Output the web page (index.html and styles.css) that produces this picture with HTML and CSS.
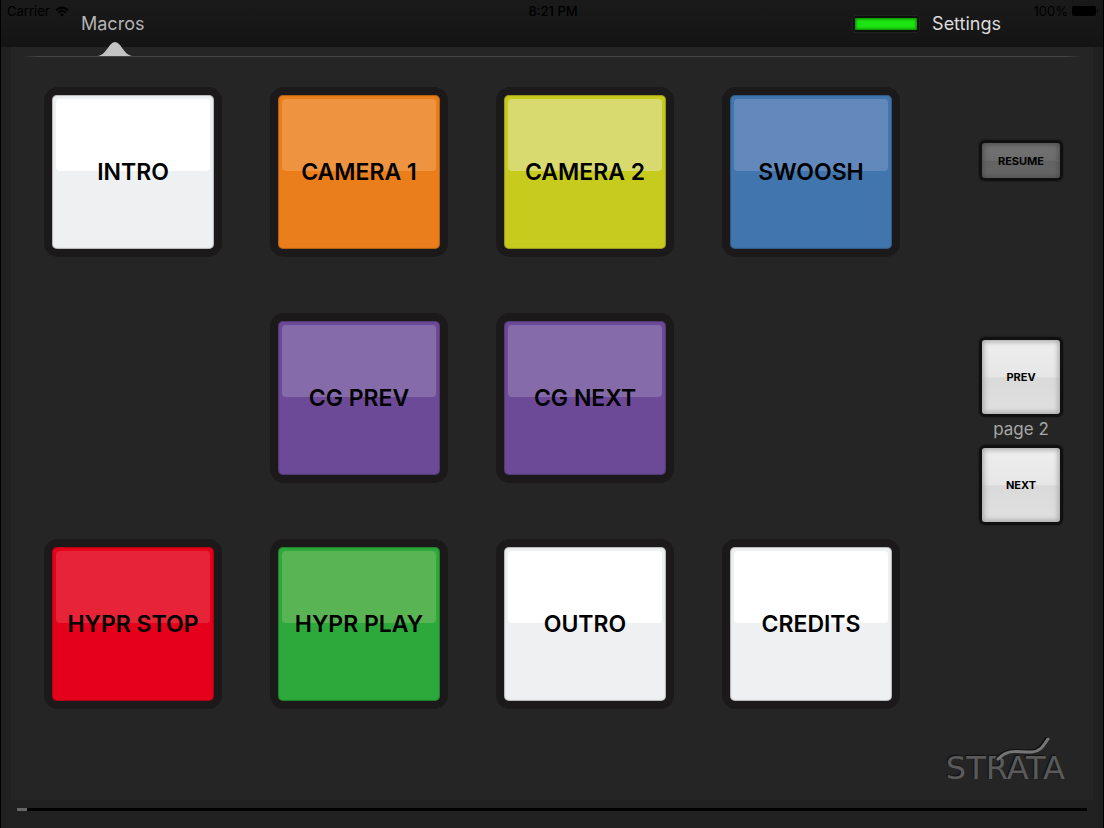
FILE: index.html
```
<!DOCTYPE html>
<html lang="en">
<head>
    <meta charset="utf-8">
    <title>Macros</title>
    <link rel="stylesheet" href="styles.css">
</head>
<body>
    <header class="top-bar">
        <div class="status-bar">
            <span class="carrier">Carrier
                <svg width="14" height="11" viewBox="0 0 14 11" fill="none" stroke="#000" stroke-width="2">
                    <path d="M1 4.2Q7-1 13 4.2M3.2 6.6Q7 3.4 10.8 6.6"/>
                    <path d="M7 10.5L4.8 8.4Q7 6.8 9.2 8.4Z" fill="#000" stroke="none"/>
                </svg>
            </span>
            <span class="clock">8:21 PM</span>
            <span class="battery">100%
                <svg width="27" height="10" viewBox="0 0 27 10">
                    <rect width="24" height="10" rx="2"/>
                    <path d="M25 3Q27 5 25 7Z"/>
                </svg>
            </span>
        </div>
        <nav class="tabs">
            <a class="tab active" href="#macros">Macros
                <svg class="pointer" width="34" height="14" viewBox="0 0 34 14">
                    <path d="M0 14C5 13 7 10 12 3Q17-3 22 3C27 10 29 13 34 14Z" fill="#c4c4c4"/>
                </svg>
            </a>
            <span class="led"></span>
            <a class="tab settings" href="#settings">Settings</a>
        </nav>
    </header>

    <main class="panel">
        <hr class="rule">
        <div class="board">
            <div class="keys">
                <button class="key white">INTRO</button>
                <button class="key orange">CAMERA 1</button>
                <button class="key yellow">CAMERA 2</button>
                <button class="key blue">SWOOSH</button>

                <button class="key purple second">CG PREV</button>
                <button class="key purple">CG NEXT</button>

                <button class="key red first">HYPR STOP</button>
                <button class="key green">HYPR PLAY</button>
                <button class="key white">OUTRO</button>
                <button class="key white">CREDITS</button>
            </div>

            <div class="side">
                <button class="small resume">RESUME</button>
                <button class="small">PREV</button>
                <p class="page">page 2</p>
                <button class="small">NEXT</button>
            </div>
        </div>

        <div class="brand">
            <div class="logo">
                <span>STRATA</span>
                <svg class="swoosh" width="56" height="26" viewBox="0 0 56 26" fill="none" stroke-linecap="round">
                    <path d="M2 21C14 9 24 15 36 14C46 13 48 5 52 1" stroke="#111" stroke-width="3"/>
                    <path d="M3 22C15 10 25 16 37 15C47 14 49 7 53 2" stroke="#777" stroke-width="3"/>
                </svg>
            </div>
        </div>
    </main>

    <div class="track"><div class="thumb"></div></div>
</body>
</html>
```
FILE: styles.css
```
* {
    box-sizing: border-box;
}

body {
    margin: 0;
    min-height: 100vh;
    display: flex;
    flex-direction: column;
    background-color: #212121;
    border-left: 1px solid #000;
    border-right: 1px solid #000;
    font-family: Inter, Roboto, sans-serif;
}

button {
    font-family: inherit;
    cursor: pointer;
}

.top-bar {
    position: relative;
    height: 47px;
    background: linear-gradient(#1a1a1a, #141414);
}

.status-bar {
    position: absolute;
    top: 3px;
    left: 6px;
    right: 4px;
    display: grid;
    grid-template-columns: 1fr auto 1fr;
    font-size: 13px;
    line-height: 16px;
    color: #000;
}

.status-bar span {
    display: flex;
    align-items: center;
    gap: 5px;
}

.clock {
    font-weight: 500;
}

.status-bar .battery {
    justify-content: flex-end;
    gap: 4px;
}

.tabs {
    display: flex;
    align-items: center;
    height: 48px;
    padding: 0 102px 0 80px;
}

.tab {
    position: relative;
    font-size: 18px;
    line-height: 24px;
    color: #b4b4b4;
    text-decoration: none;
}

.tab.settings {
    color: #dcdcdc;
}

.pointer {
    position: absolute;
    top: 30px;
    left: 50%;
    margin-left: -15px;
}

.led {
    width: 68px;
    height: 18px;
    margin-left: auto;
    margin-right: 12px;
    background-color: #1fe512;
    border: 3px solid #0a120a;
    outline: 1px solid #222;
    outline-offset: -1px;
    border-radius: 3px;
    box-shadow: inset 0 0 3px 1px #0a7a04;
}

.panel {
    flex: 1;
    margin: 0 10px;
    background-color: #252525;
}

.rule {
    height: 1px;
    margin: 9px 12px 0;
    border: none;
    background: linear-gradient(to right, #2a2a2a, #444 16px, #444 calc(100% - 16px), #2a2a2a);
}

.board {
    display: flex;
    gap: 79px;
    padding: 30px 30px 0 33px;
}

.keys {
    flex: 1;
    display: grid;
    grid-template-columns: repeat(4, 1fr);
    gap: 56px 48px;
}

.key {
    position: relative;
    height: 170px;
    padding: 0;
    border: 8px solid #1b191a;
    border-radius: 14px;
    background-color: #1b191a;
    font-size: 23px;
    font-weight: 600;
    color: #000;
    z-index: 0;
}

/* coloured face, then the glossy top half */
.key::before,
.key::after {
    content: "";
    position: absolute;
    z-index: -1;
}

.key::before {
    inset: 0;
    border-radius: 5px;
    background-color: var(--face);
    box-shadow: inset 0 0 1px 1px rgba(0, 0, 0, 0.25);
}

.key::after {
    top: 4px;
    left: 4px;
    right: 4px;
    height: 72px;
    border-radius: 4px;
    background-color: var(--gloss);
}

.white { --face: #eff0f2; --gloss: #fff; }
.orange { --face: #e97e1b; --gloss: #ee933f; }
.yellow { --face: #c7cb1e; --gloss: #d8da70; }
.blue { --face: #4175ae; --gloss: #6389bc; }
.purple { --face: #6d4a98; --gloss: #866bab; }
.red { --face: #e5001b; --gloss: #e72338; }
.green { --face: #2da83a; --gloss: #59b453; }

.second {
    grid-column: 2;
}

.first {
    grid-column: 1;
}

.side {
    width: 84px;
    padding-top: 53px;
}

.small {
    display: block;
    width: 100%;
    height: 80px;
    padding: 0;
    border: 3px solid #101010;
    border-radius: 6px;
    background: linear-gradient(#efefef, #e6e6e6 50%, #dadada 51%, #e0e0e0);
    box-shadow: inset 0 0 5px 2px #aaa, 0 0 2px #101010;
    font-size: 11px;
    font-weight: 700;
    color: #000;
}

.small.resume {
    height: 41px;
    margin-bottom: 156px;
    background: linear-gradient(#747474, #6c6c6c 50%, #626262 51%, #686868);
    box-shadow: inset 0 0 5px 2px #505050, 0 0 2px #101010;
}

.page {
    margin: 0 0 4px;
    font-size: 17px;
    line-height: 24px;
    text-align: center;
    color: #a5a8a6;
}

.brand {
    display: flex;
    justify-content: flex-end;
    padding: 28px 24px 16px;
}

.logo {
    position: relative;
    padding: 16px 4px 0;
    font-family: "DejaVu Sans", sans-serif;
    font-size: 32px;
    line-height: 30px;
    color: #5a5a5a;
    text-shadow: -1px -1px 1px #111;
}

.swoosh {
    position: absolute;
    top: 0;
    right: 18px;
}

.track {
    height: 3px;
    margin: 8px 16px 17px;
    background-color: #000;
}

.thumb {
    width: 10px;
    height: 3px;
    background-color: #666;
}
```
